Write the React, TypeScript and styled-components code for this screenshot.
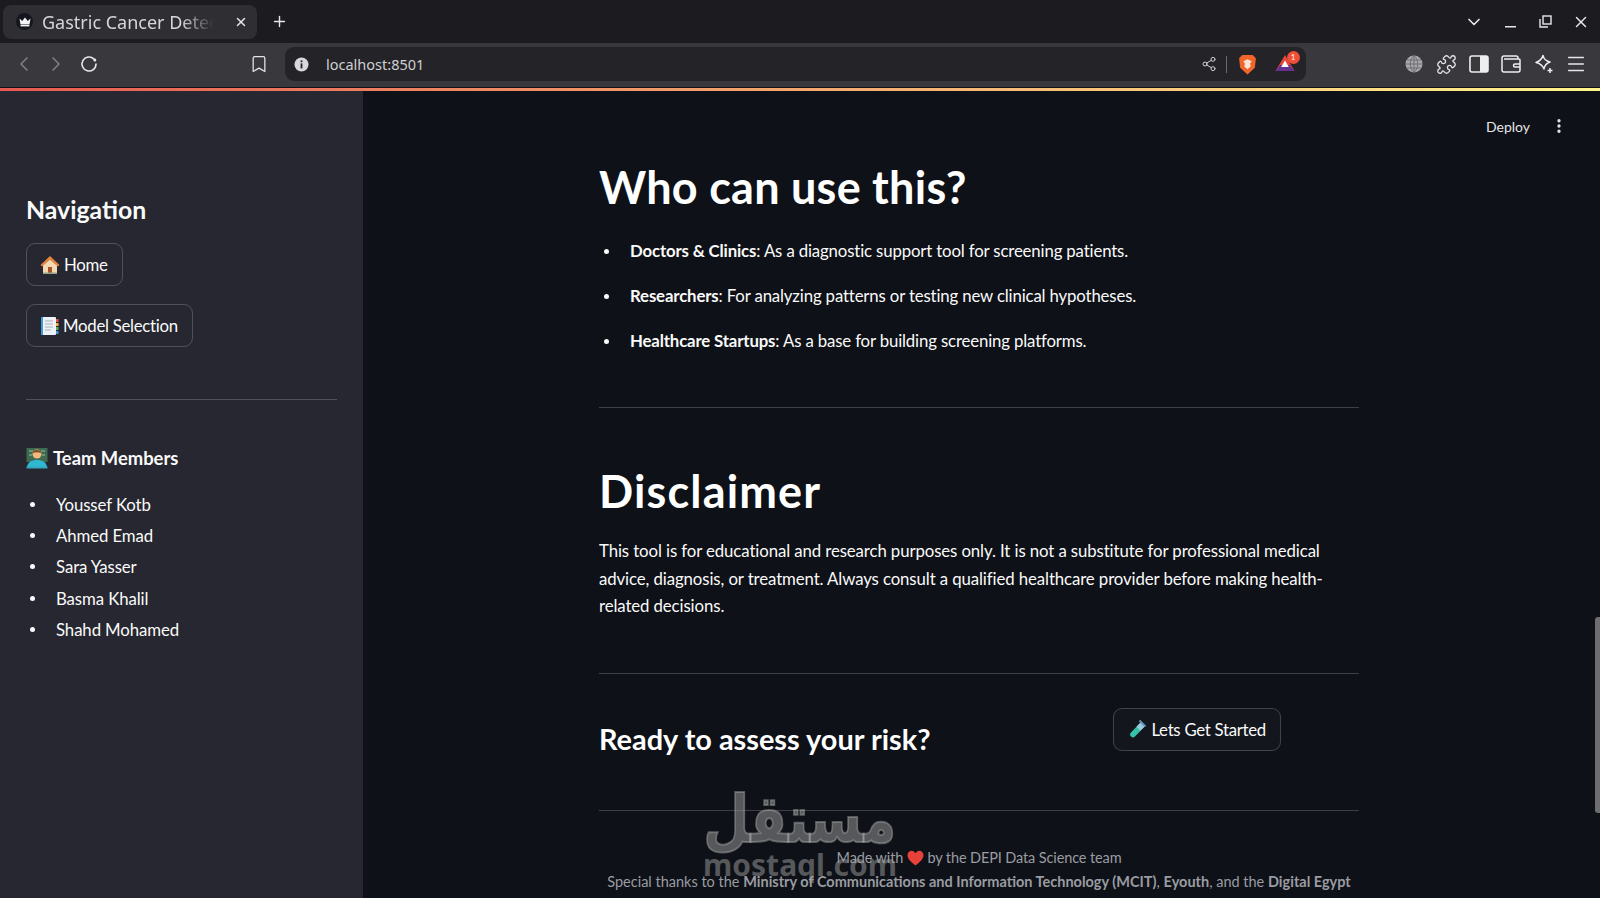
import React from 'react'
import styled, { createGlobalStyle } from 'styled-components'
import { Bookmark, ChevronDown, ChevronLeft, ChevronRight, EllipsisVertical, Menu, Plus, Puzzle, Share2, X } from 'lucide-react'

const GlobalStyle = createGlobalStyle`
    html, body {
        margin: 0;
        height: 100%;
        background: #0e1117;
        overflow: hidden;
    }
    * {
        box-sizing: border-box;
    }
    body {
        font-family: Lato, "Noto Sans", sans-serif;
    }
`

const Page = styled.div`
    width: 1600px;
    height: 898px;
    display: flex;
    flex-direction: column;
    overflow: hidden;
    position: relative;
`

/* browser chrome */
const TabStrip = styled.div`
    height: 43px;
    flex: none;
    background: #1c1b20;
    display: flex;
    align-items: center;
    padding: 4px 0 4px 3px;
    color: #e6e6e8;
`
const Tab = styled.div`
    width: 254px;
    height: 34px;
    border-radius: 8px;
    background: #2f2e33;
    display: flex;
    align-items: center;
    padding: 0 9px 0 13px;
    gap: 9px;
`
const Favicon = styled.div`
    width: 17px;
    height: 17px;
    border-radius: 50%;
    background: #14161f;
    display: flex;
    align-items: center;
    justify-content: center;
    flex: none;
`
const TabTitle = styled.div`
    flex: 1;
    font-family: "Noto Sans", sans-serif;
    font-size: 18px;
    color: #d6d6d8;
    white-space: nowrap;
    overflow: hidden;
    -webkit-mask-image: linear-gradient(90deg, #000 76%, transparent 94%);
    mask-image: linear-gradient(90deg, #000 76%, transparent 94%);
`
const NewTab = styled.div`
    margin-left: 14px;
    display: flex;
    color: #e6e6e8;
`
const WindowControls = styled.div`
    margin-left: auto;
    display: grid;
    grid-template-columns: 39px repeat(3, 35px);
    justify-items: center;
    align-items: center;
    color: #e8e8ea;
    padding-right: 2px;
`
const Toolbar = styled.div`
    height: 43px;
    flex: none;
    background: #39383d;
    display: flex;
    align-items: center;
    color: #e6e6e8;
    padding: 0 0 1px 12px;
`
const NavGroup = styled.div`
    display: flex;
    align-items: center;
    gap: 8px;
    width: 237px;
    svg:last-child {
        margin-left: 3px;
    }
`
const Address = styled.div`
    width: 1021px;
    height: 34px;
    margin-left: 16px;
    border-radius: 9px;
    background: #242328;
    display: flex;
    align-items: center;
    padding: 0 11.5px 0 9px;
    color: #d8d8da;
`
const AddressText = styled.div`
    margin-left: 17px;
    font-family: "Noto Sans", sans-serif;
    font-size: 14.5px;
    color: #cfcfd2;
`
const AddressActions = styled.div`
    margin-left: auto;
    display: flex;
    align-items: center;
`
const Separator = styled.div`
    width: 1px;
    height: 17px;
    background: #6a6a6e;
    margin: 0 11px 0 9px;
`
const BatWrap = styled.div`
    position: relative;
    width: 20px;
    height: 20px;
    margin-left: 18px;
`
const Badge = styled.div`
    position: absolute;
    top: -3px;
    right: -5px;
    width: 13px;
    height: 13px;
    border-radius: 50%;
    background: #ef4f36;
    color: #ffe;
    font-size: 8px;
    line-height: 13px;
    text-align: center;
`
const Extensions = styled.div`
    margin-left: 91.5px;
    display: grid;
    grid-template-columns: repeat(6, 32.5px);
    justify-items: center;
    align-items: center;
`
const AccentLine = styled.div`
    height: 3px;
    flex: none;
    margin-top: 1px;
    background: linear-gradient(90deg, #e85a52, #fff48a);
`
const ChromeEdge = styled.div`
    height: 1px;
    flex: none;
    background: #39383d;
`

/* app */
const Body = styled.div`
    flex: 1;
    min-height: 0;
    display: flex;
    position: relative;
`
const Sidebar = styled.aside`
    width: 363px;
    flex: none;
    background: #262730;
    padding: 101px 26px 0;
    color: #fafafa;
`
const SideTitle = styled.h2`
    margin: 0;
    font-size: 24.8px;
    line-height: 36px;
    font-weight: 700;
`
const NavButtons = styled.div`
    margin-top: 15px;
    display: flex;
    flex-direction: column;
    align-items: flex-start;
    gap: 18px;
`
const Button = styled.div<{ $bg?: string }>`
    height: 43px;
    display: inline-flex;
    align-items: center;
    gap: 4px;
    padding: 0 14px 0 13px;
    border: 1px solid rgba(250, 250, 250, 0.2);
    border-radius: 9px;
    font-size: 16.8px;
    letter-spacing: -0.28px;
    color: #fafafa;
    background: ${(p) => p.$bg || 'transparent'};
`
const SideRule = styled.hr`
    margin: 52px 0 0;
    border: none;
    border-top: 1px solid rgba(250, 250, 250, 0.2);
    width: 311px;
`
const TeamTitle = styled.h3`
    margin: 43px 0 0;
    font-size: 18.4px;
    line-height: 30px;
    font-weight: 700;
    display: flex;
    align-items: center;
    gap: 5px;
`
const TeamList = styled.ul`
    list-style: none;
    margin: 16px 0 0;
    padding: 0;
`
const TeamItem = styled.li`
    height: 31.2px;
    display: flex;
    align-items: center;
    font-size: 16.8px;
    letter-spacing: -0.1px;
    color: #fafafa;
    padding-left: 30px;
    position: relative;
    &::before {
        content: '';
        position: absolute;
        left: 4px;
        top: 13px;
        width: 5px;
        height: 5px;
        border-radius: 50%;
        background: #fafafa;
    }
`
const Main = styled.main`
    flex: 1;
    display: flex;
    flex-direction: column;
    align-items: flex-start;
    position: relative;
    padding: 0 0 0 236px;
    color: #fafafa;
    min-width: 0;
`
const Column = styled.div`
    width: 760px;
    padding-top: 67px;
`
const TopActions = styled.div`
    position: absolute;
    top: 26px;
    right: 32px;
    display: flex;
    align-items: center;
    gap: 20px;
    font-size: 14px;
    color: #e6e6e8;
`
const BigHeading = styled.h1<{ $top?: number; $spacing: number }>`
    margin: ${(p) => p.$top || 0}px 0 0;
    font-size: 45px;
    line-height: 58px;
    font-weight: 700;
    letter-spacing: ${(p) => p.$spacing}px;
    color: #fff;
`
const Bullets = styled.ul`
    list-style: none;
    margin: 21px 0 0;
    padding: 0;
    display: flex;
    flex-direction: column;
    gap: 17px;
`
const Bullet = styled.li`
    font-size: 16.8px;
    letter-spacing: -0.15px;
    line-height: 28px;
    padding-left: 31px;
    position: relative;
    &::before {
        content: '';
        position: absolute;
        left: 5px;
        top: 12px;
        width: 5px;
        height: 5px;
        border-radius: 50%;
        background: #fafafa;
    }
`
const Rule = styled.hr<{ $top: number }>`
    margin: ${(p) => p.$top}px 0 0;
    border: none;
    border-top: 1px solid rgba(250, 250, 250, 0.2);
`
const Paragraph = styled.p`
    margin: 17px 0 0;
    font-size: 16.8px;
    letter-spacing: -0.1px;
    line-height: 27.5px;
`
const CtaRow = styled.div`
    display: flex;
    align-items: flex-start;
    justify-content: space-between;
    padding: 34px 78px 0 0;
`
const CtaHeading = styled.h2`
    margin: 11px 0 0;
    font-size: 28.9px;
    line-height: 40px;
    font-weight: 700;
    color: #fff;
`
const Footer = styled.div`
    margin-top: 35px;
    text-align: center;
    font-size: 14.5px;
    line-height: 24px;
    color: #9a9ca2;
    white-space: nowrap;
    b {
        font-weight: 700;
    }
`
const FooterLead = styled.div`
    letter-spacing: -0.12px;
`
const HeartIcon = styled.span`
    display: inline-block;
    line-height: 0;
    vertical-align: -3px;
    svg {
        display: block;
    }
`
const Watermark = styled.div`
    position: absolute;
    left: 700px;
    top: 783px;
    width: 200px;
    display: flex;
    flex-direction: column;
    align-items: center;
    color: rgba(160, 160, 160, 0.5);
    pointer-events: none;
    white-space: nowrap;
`
const WatermarkArabic = styled.div`
    font-family: "DejaVu Sans", sans-serif;
    font-weight: 700;
    font-size: 66px;
    line-height: 74px;
    -webkit-text-stroke: 2px rgba(160, 160, 160, 0.5);
    transform: scaleX(0.8);
`
const WatermarkLatin = styled.div`
    font-family: "Noto Sans", sans-serif;
    font-weight: 700;
    font-size: 30px;
    line-height: 34px;
    margin-top: -9px;
`
const Scrollbar = styled.div`
    position: absolute;
    right: 0;
    top: 526px;
    width: 5px;
    height: 196px;
    border-radius: 3px 0 0 3px;
    background: #6e6e70;
`

const CrownIcon = () => (
    <svg width="12" height="10" viewBox="0 0 12 10">
        <path d="M0.5 1.5 3.2 4 6 0.5 8.8 4l2.7-2.5-1 6h-9z" fill="#f4f4f6" />
        <rect x="1.6" y="8" width="8.8" height="1.4" fill="#f4f4f6" />
    </svg>
)

const ReloadIcon = () => (
    <svg width="20" height="20" viewBox="0 0 20 20" fill="none" stroke="#e8e8ea" strokeWidth="1.6">
        <path d="M17 10a7 7 0 1 1-2.2-5.1" strokeLinecap="round" />
        <circle cx="15.8" cy="6" r="1.5" fill="#e8e8ea" stroke="none" />
    </svg>
)

const InfoIcon = () => (
    <svg width="15" height="15" viewBox="0 0 15 15">
        <circle cx="7.5" cy="7.5" r="7" fill="#d8d8da" />
        <rect x="6.6" y="6.4" width="1.8" height="5" fill="#242328" />
        <rect x="6.6" y="3.4" width="1.8" height="1.8" fill="#242328" />
    </svg>
)

const BraveIcon = () => (
    <svg width="19" height="21" viewBox="0 0 18 20">
        <path d="M4 1h10l3 3-1 9-7 6.500-7-6.500-1-9z" fill="#f0662a" />
        <path d="M5 7l4-2 4 2-1.500 2 .5 3-3 2.500L6 12l.5-3z" fill="#fbe3d6" />
    </svg>
)

const BatIcon = () => (
    <svg width="20" height="18" viewBox="0 0 20 18">
        <path d="M10 1 19.500 17H.5z" fill="#e9463b" />
        <path d="M.5 17h19L14.800 11H5.200z" fill="#65308f" />
        <path d="M10 6.500 13.800 13H6.200z" fill="#fff" />
    </svg>
)

const GlobeIcon = () => (
    <svg width="18" height="18" viewBox="0 0 18 18" fill="none">
        <circle cx="9" cy="9" r="8.500" fill="#a9a9ad" />
        <path d="M.5 9h17M2 5h14M2 13h14M9 .5v17M9 .5c-5 5-5 12 0 17M9 .5c5 5 5 12 0 17" stroke="#626266" strokeWidth="0.8" />
    </svg>
)

const SidePanelIcon = () => (
    <svg width="20" height="18" viewBox="0 0 20 18">
        <rect x="1" y="1" width="18" height="16" rx="2" fill="none" stroke="#eeeef0" strokeWidth="1.6" />
        <rect x="11" y="1" width="8" height="16" fill="#eeeef0" />
    </svg>
)

const WalletIcon = () => (
    <svg width="20" height="18" viewBox="0 0 20 18" fill="none" stroke="#eeeef0" strokeWidth="1.5">
        <path d="M3 4h15a1 1 0 0 1 1 1v10a2 2 0 0 1-2 2H3a2 2 0 0 1-2-2V3a2 2 0 0 1 2-2h12a2 2 0 0 1 2 2v1" />
        <path d="M19 9h-5a1.500 1.500 0 0 0 0 3h5" />
    </svg>
)

const LeoIcon = () => (
    <svg width="20" height="20" viewBox="0 0 20 20" fill="none" stroke="#eeeef0" strokeWidth="1.500">
        <path d="M9 1.500c1 4 2.500 5.500 7 6.500-4 1.500-5.500 3-6 7-1.500-4-3.500-5.500-8-6.500 4-1.500 6-3 7-7z" strokeLinejoin="round" />
        <path d="M16 14v5M13.500 16.500h5" stroke="#eeeef0" />
    </svg>
)

const RestoreIcon = () => (
    <svg width="13" height="13" viewBox="0 0 13 13" fill="none" stroke="#e8e8ea" strokeWidth="1.400">
        <rect x="4" y="1" width="8" height="8" />
        <path d="M1 4v8h8" />
    </svg>
)

const MinimizeIcon = () => (
    <svg width="13" height="13" viewBox="0 0 13 13">
        <rect x="1" y="11" width="11" height="1.500" fill="#e8e8ea" />
    </svg>
)

const HouseEmoji = () => (
    <svg width="20" height="20" viewBox="0 0 20 20">
        <path d="M10 1 0.500 10l1.500 1.500L10 4.500l8 7 1.500-1.500z" fill="#e8833a" />
        <path d="M3 10.500 10 4.500l7 6V19H3z" fill="#f2d9b0" />
        <path d="M8 12h4v7H8z" fill="#a5532a" />
        <rect x="3" y="17.500" width="14" height="1.500" fill="#8fa28a" />
    </svg>
)

const NotebookEmoji = () => (
    <svg width="19" height="20" viewBox="0 0 19 20">
        <rect x="1" y="1" width="15" height="18" rx="1" fill="#eef1f6" />
        <rect x="1" y="1" width="2" height="18" fill="#3d9bd8" />
        <path d="M5 5h8M5 8h8M5 11h8M5 14h6" stroke="#a7b0bc" strokeWidth="1" />
        <rect x="16" y="3" width="2.500" height="3" fill="#e2574c" />
        <rect x="16" y="7" width="2.500" height="3" fill="#f4b942" />
        <rect x="16" y="11" width="2.500" height="3" fill="#58b368" />
        <rect x="16" y="15" width="2.500" height="3" fill="#3d9bd8" />
    </svg>
)

const TechnologistEmoji = () => (
    <svg width="22" height="22" viewBox="0 0 22 22">
        <rect x="0.500" y="1" width="21" height="14" fill="#3f6b52" />
        <path d="M3 4h4M15 4h4M3 8h3M16 8h3" stroke="#8fc79c" strokeWidth="1" />
        <circle cx="11" cy="7" r="4.500" fill="#f3b77c" />
        <path d="M6.500 6c0-4 9-4 9 0-3-1-6-1-9 0z" fill="#7a4a25" />
        <path d="M1 21c0-6 5-8 10-8s10 2 10 8z" fill="#2fb8d2" />
        <rect x="0.500" y="19.500" width="21" height="2" fill="#34a8be" />
    </svg>
)

const TubeEmoji = () => (
    <svg width="20" height="20" viewBox="0 0 20 20">
        <path d="M14 3 4 13.500a2.800 2.800 0 0 0 4 4L18 7z" fill="#37c2a8" />
        <path d="M14 3 9.500 7.700l4 4L18 7z" fill="#9cc9dc" />
        <path d="M12.500 1.500l6 6" stroke="#5f93b8" strokeWidth="2" />
    </svg>
)

const Heart = () => (
    <svg width="17" height="16" viewBox="0 0 17 16">
        <path d="M8.500 15.500C3 11 .5 8.500.5 5.200.5 2.500 2.500.8 4.600.8c1.700 0 3 .9 3.900 2.400C9.400 1.700 10.700.8 12.400.8c2.100 0 4.100 1.700 4.100 4.400 0 3.300-2.500 5.800-8 10.300z" fill="#e8403a" />
    </svg>
)

const team = ['Youssef Kotb', 'Ahmed Emad', 'Sara Yasser', 'Basma Khalil', 'Shahd Mohamed']

const App = () => (
    <Page>
        <GlobalStyle />
        <TabStrip>
            <Tab>
                <Favicon>
                    <CrownIcon />
                </Favicon>
                <TabTitle>Gastric Cancer Detection</TabTitle>
                <X size={14} strokeWidth={2.5} />
            </Tab>
            <NewTab>
                <Plus size={17} />
            </NewTab>
            <WindowControls>
                <ChevronDown size={20} />
                <MinimizeIcon />
                <RestoreIcon />
                <X size={18} />
            </WindowControls>
        </TabStrip>
        <Toolbar>
            <NavGroup>
                <ChevronLeft size={24} strokeWidth={1.3} color="#8a8a8e" />
                <ChevronRight size={24} strokeWidth={1.3} color="#8a8a8e" />
                <ReloadIcon />
            </NavGroup>
            <Bookmark size={20} strokeWidth={1.5} />
            <Address>
                <InfoIcon />
                <AddressText>localhost:8501</AddressText>
                <AddressActions>
                    <Share2 size={16} strokeWidth={1.4} />
                    <Separator />
                    <BraveIcon />
                    <BatWrap>
                        <BatIcon />
                        <Badge>1</Badge>
                    </BatWrap>
                </AddressActions>
            </Address>
            <Extensions>
                <GlobeIcon />
                <Puzzle size={21} strokeWidth={1.5} />
                <SidePanelIcon />
                <WalletIcon />
                <LeoIcon />
                <Menu size={22} strokeWidth={1.6} />
            </Extensions>
        </Toolbar>
        <ChromeEdge />
        <AccentLine />
        <Body>
            <Sidebar>
                <SideTitle>Navigation</SideTitle>
                <NavButtons>
                    <Button>
                        <HouseEmoji />
                        Home
                    </Button>
                    <Button>
                        <NotebookEmoji />
                        Model Selection
                    </Button>
                </NavButtons>
                <SideRule />
                <TeamTitle>
                    <TechnologistEmoji />
                    Team Members
                </TeamTitle>
                <TeamList>
                    {team.map((name) => (
                        <TeamItem key={name}>{name}</TeamItem>
                    ))}
                </TeamList>
            </Sidebar>
            <Main>
                <TopActions>
                    Deploy
                    <EllipsisVertical size={18} strokeWidth={2.4} />
                </TopActions>
                <Column>
                    <BigHeading $spacing={0.25}>Who can use this?</BigHeading>
                    <Bullets>
                        <Bullet>
                            <b>Doctors &amp; Clinics</b>: As a diagnostic support tool for screening patients.
                        </Bullet>
                        <Bullet>
                            <b>Researchers</b>: For analyzing patterns or testing new clinical hypotheses.
                        </Bullet>
                        <Bullet>
                            <b>Healthcare Startups</b>: As a base for building screening platforms.
                        </Bullet>
                    </Bullets>
                    <Rule $top={52} />
                    <BigHeading $top={54} $spacing={1.15}>
                        Disclaimer
                    </BigHeading>
                    <Paragraph>
                        This tool is for educational and research purposes only. It is not a substitute for
                        professional medical advice, diagnosis, or treatment. Always consult a qualified healthcare
                        provider before making health-related decisions.
                    </Paragraph>
                    <Rule $top={53} />
                    <CtaRow>
                        <CtaHeading>Ready to assess your risk?</CtaHeading>
                        <Button $bg="#13161d">
                            <TubeEmoji />
                            Lets Get Started
                        </Button>
                    </CtaRow>
                    <Rule $top={51} />
                    <Footer>
                        <FooterLead>
                            Made with{' '}
                            <HeartIcon>
                                <Heart />
                            </HeartIcon>{' '}
                            by the DEPI Data Science team
                        </FooterLead>
                        Special thanks to the <b>Ministry of Communications and Information Technology (MCIT)</b>,{' '}
                        <b>Eyouth</b>, and the <b>Digital Egypt</b>
                    </Footer>
                </Column>
                <Scrollbar />
            </Main>
        </Body>
        <Watermark>
            <WatermarkArabic>مستقل</WatermarkArabic>
            <WatermarkLatin>mostaql.com</WatermarkLatin>
        </Watermark>
    </Page>
)

export default App
